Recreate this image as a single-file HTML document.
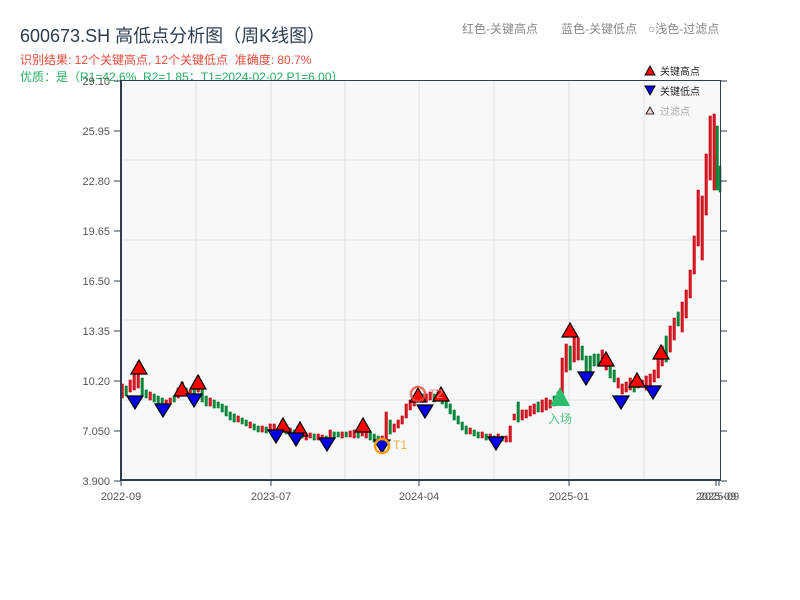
<!DOCTYPE html>
<html><head><meta charset="utf-8"><style>
html,body{margin:0;padding:0;background:#fff;width:800px;height:600px;overflow:hidden}
body{font-family:"Liberation Sans","Noto Sans CJK SC",sans-serif;position:relative}
.t{position:absolute;white-space:nowrap}
svg text{font-family:"Liberation Sans","Noto Sans CJK SC",sans-serif}
.r{fill:#e8141c;stroke:#b00010;stroke-width:.6}
.g{fill:#0a8a3c;stroke:#067a32;stroke-width:.6}
.hi{fill:#f00;stroke:#000;stroke-width:1.2}
.lo{fill:#0000ee;stroke:#000;stroke-width:1.2}
</style></head><body>
<div class="t" style="left:20px;top:22px;font-size:18px;color:#2c3e50">600673.SH 高低点分析图（周K线图）</div>
<div class="t" style="left:20px;top:51px;font-size:12px;color:#e74c3c">识别结果: 12个关键高点, 12个关键低点&nbsp;&nbsp;准确度: 80.7%</div>
<div class="t" style="left:20px;top:68px;font-size:12px;color:#27ae60">优质：是（R1=42.6%, R2=1.85；T1=2024-02-02 P1=6.00）</div>
<div class="t" style="left:462px;top:20px;font-size:12px;color:#888">红色-关键高点</div>
<div class="t" style="left:561px;top:20px;font-size:12px;color:#888">蓝色-关键低点</div>
<div class="t" style="left:648px;top:20px;font-size:12px;color:#888">○浅色-过滤点</div>
<svg width="800" height="600" style="position:absolute;left:0;top:0" xmlns="http://www.w3.org/2000/svg">
<rect x="121" y="80" width="599" height="400" fill="#f6f8fa"/>
<g stroke="#dfe3e8">
<line x1="121" x2="720" y1="160" y2="160"/><line x1="121" x2="720" y1="240" y2="240"/><line x1="121" x2="720" y1="320" y2="320"/><line x1="121" x2="720" y1="400" y2="400"/>
<line y1="80" y2="480" x1="196" x2="196"/><line y1="80" y2="480" x1="271" x2="271"/><line y1="80" y2="480" x1="345" x2="345"/><line y1="80" y2="480" x1="419" x2="419"/><line y1="80" y2="480" x1="494" x2="494"/><line y1="80" y2="480" x1="569" x2="569"/><line y1="80" y2="480" x1="644" x2="644"/>
</g>
<g>
<rect class="r" x="121" y="384" width="2.4" height="14"/>
<rect class="g" x="125" y="386" width="2.4" height="10"/>
<rect class="r" x="129" y="380" width="2.4" height="12"/>
<rect class="r" x="133" y="372" width="2.4" height="18"/>
<rect class="r" x="137" y="362" width="2.4" height="26"/>
<rect class="g" x="141" y="378" width="2.4" height="17"/>
<rect class="g" x="145" y="390" width="2.4" height="8"/>
<rect class="r" x="149" y="392" width="2.4" height="8"/>
<rect class="g" x="153" y="394" width="2.4" height="8"/>
<rect class="g" x="157" y="396" width="2.4" height="8"/>
<rect class="g" x="161" y="398" width="2.4" height="8"/>
<rect class="r" x="165" y="400" width="2.4" height="8"/>
<rect class="r" x="169" y="398" width="2.4" height="6"/>
<rect class="g" x="173" y="396" width="2.4" height="6"/>
<rect class="r" x="177" y="388" width="2.4" height="10"/>
<rect class="r" x="181" y="382" width="2.4" height="12"/>
<rect class="g" x="185" y="388" width="2.4" height="8"/>
<rect class="r" x="189" y="390" width="2.4" height="8"/>
<rect class="g" x="193" y="384" width="2.4" height="12"/>
<rect class="r" x="197" y="376" width="2.4" height="16"/>
<rect class="g" x="201" y="390" width="2.4" height="12"/>
<rect class="g" x="205" y="396" width="2.4" height="10"/>
<rect class="r" x="209" y="398" width="2.4" height="8"/>
<rect class="g" x="213" y="400" width="2.4" height="8"/>
<rect class="g" x="217" y="402" width="2.4" height="6"/>
<rect class="g" x="221" y="404" width="2.4" height="8"/>
<rect class="g" x="225" y="406" width="2.4" height="10"/>
<rect class="g" x="229" y="412" width="2.4" height="8"/>
<rect class="g" x="233" y="414" width="2.4" height="8"/>
<rect class="r" x="237" y="416" width="2.4" height="6"/>
<rect class="g" x="241" y="418" width="2.4" height="6"/>
<rect class="g" x="245" y="420" width="2.4" height="6"/>
<rect class="r" x="249" y="422" width="2.4" height="6"/>
<rect class="g" x="253" y="424" width="2.4" height="6"/>
<rect class="g" x="257" y="426" width="2.4" height="6"/>
<rect class="r" x="261" y="426" width="2.4" height="6"/>
<rect class="g" x="265" y="427" width="2.4" height="6"/>
<rect class="r" x="269" y="424" width="2.4" height="8"/>
<rect class="r" x="273" y="424" width="2.4" height="10"/>
<rect class="g" x="277" y="428" width="2.4" height="8"/>
<rect class="r" x="281" y="420" width="2.4" height="12"/>
<rect class="g" x="285" y="426" width="2.4" height="8"/>
<rect class="r" x="289" y="428" width="2.4" height="8"/>
<rect class="g" x="293" y="430" width="2.4" height="8"/>
<rect class="r" x="297" y="426" width="2.4" height="10"/>
<rect class="g" x="301" y="432" width="2.4" height="6"/>
<rect class="r" x="305" y="434" width="2.4" height="6"/>
<rect class="r" x="309" y="433" width="2.4" height="5"/>
<rect class="g" x="313" y="434" width="2.4" height="6"/>
<rect class="r" x="317" y="434" width="2.4" height="6"/>
<rect class="r" x="321" y="435" width="2.4" height="7"/>
<rect class="g" x="325" y="436" width="2.4" height="8"/>
<rect class="r" x="329" y="430" width="2.4" height="10"/>
<rect class="g" x="333" y="432" width="2.4" height="6"/>
<rect class="g" x="337" y="432" width="2.4" height="5"/>
<rect class="r" x="341" y="432" width="2.4" height="6"/>
<rect class="g" x="345" y="432" width="2.4" height="5"/>
<rect class="r" x="349" y="431" width="2.4" height="6"/>
<rect class="r" x="353" y="430" width="2.4" height="8"/>
<rect class="g" x="357" y="432" width="2.4" height="6"/>
<rect class="r" x="361" y="424" width="2.4" height="12"/>
<rect class="r" x="365" y="430" width="2.4" height="8"/>
<rect class="g" x="369" y="432" width="2.4" height="8"/>
<rect class="g" x="373" y="434" width="2.4" height="8"/>
<rect class="g" x="377" y="436" width="2.4" height="10"/>
<rect class="r" x="381" y="436" width="2.4" height="10"/>
<rect class="r" x="385" y="412" width="2.4" height="28"/>
<rect class="g" x="389" y="420" width="2.4" height="14"/>
<rect class="r" x="393" y="424" width="2.4" height="8"/>
<rect class="r" x="397" y="420" width="2.4" height="8"/>
<rect class="r" x="401" y="416" width="2.4" height="8"/>
<rect class="r" x="405" y="404" width="2.4" height="14"/>
<rect class="r" x="409" y="400" width="2.4" height="10"/>
<rect class="r" x="413" y="396" width="2.4" height="10"/>
<rect class="r" x="417" y="392" width="2.4" height="10"/>
<rect class="g" x="421" y="394" width="2.4" height="8"/>
<rect class="r" x="425" y="394" width="2.4" height="8"/>
<rect class="r" x="429" y="392" width="2.4" height="8"/>
<rect class="g" x="433" y="394" width="2.4" height="8"/>
<rect class="r" x="437" y="390" width="2.4" height="10"/>
<rect class="g" x="441" y="396" width="2.4" height="8"/>
<rect class="g" x="445" y="400" width="2.4" height="8"/>
<rect class="g" x="449" y="404" width="2.4" height="10"/>
<rect class="g" x="453" y="410" width="2.4" height="10"/>
<rect class="g" x="457" y="416" width="2.4" height="8"/>
<rect class="g" x="461" y="422" width="2.4" height="8"/>
<rect class="g" x="465" y="426" width="2.4" height="8"/>
<rect class="r" x="469" y="428" width="2.4" height="6"/>
<rect class="g" x="473" y="430" width="2.4" height="6"/>
<rect class="g" x="477" y="432" width="2.4" height="6"/>
<rect class="r" x="481" y="432" width="2.4" height="6"/>
<rect class="g" x="485" y="434" width="2.4" height="6"/>
<rect class="r" x="489" y="434" width="2.4" height="6"/>
<rect class="g" x="493" y="436" width="2.4" height="6"/>
<rect class="r" x="497" y="434" width="2.4" height="8"/>
<rect class="g" x="501" y="436" width="2.4" height="5"/>
<rect class="r" x="505" y="436" width="2.4" height="6"/>
<rect class="r" x="509" y="426" width="2.4" height="16"/>
<rect class="r" x="513" y="414" width="2.4" height="6"/>
<rect class="g" x="517" y="402" width="2.4" height="20"/>
<rect class="r" x="521" y="410" width="2.4" height="10"/>
<rect class="r" x="525" y="410" width="2.4" height="8"/>
<rect class="r" x="529" y="406" width="2.4" height="10"/>
<rect class="r" x="533" y="404" width="2.4" height="10"/>
<rect class="g" x="537" y="402" width="2.4" height="10"/>
<rect class="r" x="541" y="400" width="2.4" height="12"/>
<rect class="r" x="545" y="398" width="2.4" height="12"/>
<rect class="r" x="549" y="400" width="2.4" height="8"/>
<rect class="g" x="553" y="396" width="2.4" height="10"/>
<rect class="r" x="557" y="392" width="2.4" height="12"/>
<rect class="r" x="561" y="358" width="2.4" height="42"/>
<rect class="r" x="565" y="344" width="2.4" height="28"/>
<rect class="g" x="569" y="346" width="2.4" height="24"/>
<rect class="r" x="573" y="334" width="2.4" height="28"/>
<rect class="r" x="577" y="338" width="2.4" height="22"/>
<rect class="g" x="581" y="346" width="2.4" height="14"/>
<rect class="g" x="585" y="356" width="2.4" height="24"/>
<rect class="g" x="589" y="356" width="2.4" height="16"/>
<rect class="g" x="593" y="354" width="2.4" height="12"/>
<rect class="g" x="597" y="354" width="2.4" height="12"/>
<rect class="r" x="601" y="350" width="2.4" height="12"/>
<rect class="r" x="605" y="356" width="2.4" height="14"/>
<rect class="g" x="609" y="366" width="2.4" height="12"/>
<rect class="g" x="613" y="370" width="2.4" height="12"/>
<rect class="r" x="617" y="378" width="2.4" height="10"/>
<rect class="r" x="621" y="384" width="2.4" height="10"/>
<rect class="r" x="625" y="382" width="2.4" height="10"/>
<rect class="r" x="629" y="378" width="2.4" height="12"/>
<rect class="g" x="633" y="380" width="2.4" height="12"/>
<rect class="g" x="637" y="378" width="2.4" height="10"/>
<rect class="r" x="641" y="380" width="2.4" height="6"/>
<rect class="r" x="645" y="376" width="2.4" height="14"/>
<rect class="r" x="649" y="374" width="2.4" height="12"/>
<rect class="r" x="653" y="370" width="2.4" height="12"/>
<rect class="r" x="657" y="356" width="2.4" height="22"/>
<rect class="r" x="661" y="346" width="2.4" height="20"/>
<rect class="g" x="665" y="336" width="2.4" height="26"/>
<rect class="r" x="669" y="326" width="2.4" height="26"/>
<rect class="r" x="673" y="318" width="2.4" height="22"/>
<rect class="g" x="677" y="312" width="2.4" height="14"/>
<rect class="r" x="681" y="302" width="2.4" height="30"/>
<rect class="r" x="685" y="290" width="2.4" height="28"/>
<rect class="r" x="689" y="270" width="2.4" height="28"/>
<rect class="r" x="693" y="236" width="2.4" height="38"/>
<rect class="r" x="697" y="190" width="2.4" height="56"/>
<rect class="r" x="701" y="196" width="2.4" height="64"/>
<rect class="r" x="705" y="154" width="2.4" height="61"/>
<rect class="r" x="709" y="116" width="2.4" height="64"/>
<rect class="r" x="713" y="114" width="2.4" height="76"/>
<rect class="g" x="716" y="126" width="2.4" height="64"/>
<rect class="g" x="719" y="166" width="2" height="26"/>
</g>
<g>
<polygon class="hi" points="139,360 131,374 147,374"/>
<polygon class="hi" points="182,382 174,396 190,396"/>
<polygon class="hi" points="198,375 190,389 206,389"/>
<polygon class="hi" points="283,418 275,432 291,432"/>
<polygon class="hi" points="300,422 292,436 308,436"/>
<polygon class="hi" points="363,418 355,432 371,432"/>
<polygon class="hi" points="418,388 410,402 426,402"/>
<polygon class="hi" points="441,387 433,401 449,401"/>
<polygon class="hi" points="570,323 562,337 578,337"/>
<polygon class="hi" points="606,352 598,366 614,366"/>
<polygon class="hi" points="637,373 629,387 645,387"/>
<polygon class="hi" points="661,345 653,359 669,359"/>
<polygon class="lo" points="127,396 143,396 135,409"/>
<polygon class="lo" points="155,404 171,404 163,417"/>
<polygon class="lo" points="186,394 202,394 194,407"/>
<polygon class="lo" points="268,430 284,430 276,443"/>
<polygon class="lo" points="288,433 304,433 296,446"/>
<polygon class="lo" points="319,438 335,438 327,451"/>
<polygon class="lo" points="374,440 390,440 382,453"/>
<polygon class="lo" points="417,405 433,405 425,418"/>
<polygon class="lo" points="488,437 504,437 496,450"/>
<polygon class="lo" points="578,372 594,372 586,385"/>
<polygon class="lo" points="613,396 629,396 621,409"/>
<polygon class="lo" points="645,386 661,386 653,399"/>
</g>
<polygon points="560,387 550,406 570,406" fill="#2ebd6b"/>
<text x="548" y="423" font-size="12" fill="#52c47f">入场</text>
<circle cx="382" cy="446" r="7" fill="none" stroke="#f39c12" stroke-width="2.5"/>
<text x="393" y="449" font-size="12" fill="#f5b041">T1</text>
<circle cx="418" cy="394" r="7" fill="none" stroke="#e74c3c" stroke-width="2.5" opacity="0.8"/>
<text x="429" y="398" font-size="12" fill="#f1948a">T2</text>
<line x1="121" x2="720" y1="80.5" y2="80.5" stroke="#2c3e50"/>
<line x1="121" x2="121" y1="80" y2="481" stroke="#2c3e50" stroke-width="2"/>
<line x1="120" x2="721" y1="480" y2="480" stroke="#2c3e50" stroke-width="2"/>
<line x1="720.5" x2="720.5" y1="80" y2="481" stroke="#2c3e50"/>
<g stroke="#2c3e50">
<line x1="114" x2="120" y1="81" y2="81"/><line x1="114" x2="120" y1="131" y2="131"/><line x1="114" x2="120" y1="181" y2="181"/><line x1="114" x2="120" y1="231" y2="231"/><line x1="114" x2="120" y1="281" y2="281"/><line x1="114" x2="120" y1="331" y2="331"/><line x1="114" x2="120" y1="381" y2="381"/><line x1="114" x2="120" y1="431" y2="431"/><line x1="114" x2="120" y1="481" y2="481"/>
<line x1="721" x2="727" y1="81" y2="81"/><line x1="721" x2="727" y1="131" y2="131"/><line x1="721" x2="727" y1="181" y2="181"/><line x1="721" x2="727" y1="231" y2="231"/><line x1="721" x2="727" y1="281" y2="281"/><line x1="721" x2="727" y1="331" y2="331"/><line x1="721" x2="727" y1="381" y2="381"/><line x1="721" x2="727" y1="431" y2="431"/><line x1="721" x2="727" y1="481" y2="481"/>
<line x1="121" x2="121" y1="481" y2="486"/><line x1="271" x2="271" y1="481" y2="486"/><line x1="419" x2="419" y1="481" y2="486"/><line x1="569" x2="569" y1="481" y2="486"/><line x1="716" x2="716" y1="481" y2="486"/><line x1="719" x2="719" y1="481" y2="486"/>
</g>
<g font-size="11" fill="#555" text-anchor="end">
<text x="110" y="85">29.10</text><text x="110" y="135">25.95</text><text x="110" y="185">22.80</text><text x="110" y="235">19.65</text><text x="110" y="285">16.50</text><text x="110" y="335">13.35</text><text x="110" y="385">10.20</text><text x="110" y="435">7.050</text><text x="110" y="485">3.900</text>
</g>
<g font-size="11" fill="#555" text-anchor="middle">
<text x="121" y="500">2022-09</text><text x="271" y="500">2023-07</text><text x="419" y="500">2024-04</text><text x="569" y="500">2025-01</text><text x="716" y="500">2025-09</text><text x="719" y="500">2025-09</text>
</g>
<polygon points="650,66 645,75 655,75" fill="#f00" stroke="#000"/><text x="660" y="75" font-size="10" fill="#222">关键高点</text>
<polygon points="645,86 655,86 650,95" fill="#00e" stroke="#000"/><text x="660" y="95" font-size="10" fill="#222">关键低点</text>
<polygon points="650,107 646,114 654,114" fill="#fcc" stroke="#000" stroke-width="0.8"/><text x="660" y="115" font-size="10" fill="#aaa">过滤点</text>
</svg>
</body></html>
